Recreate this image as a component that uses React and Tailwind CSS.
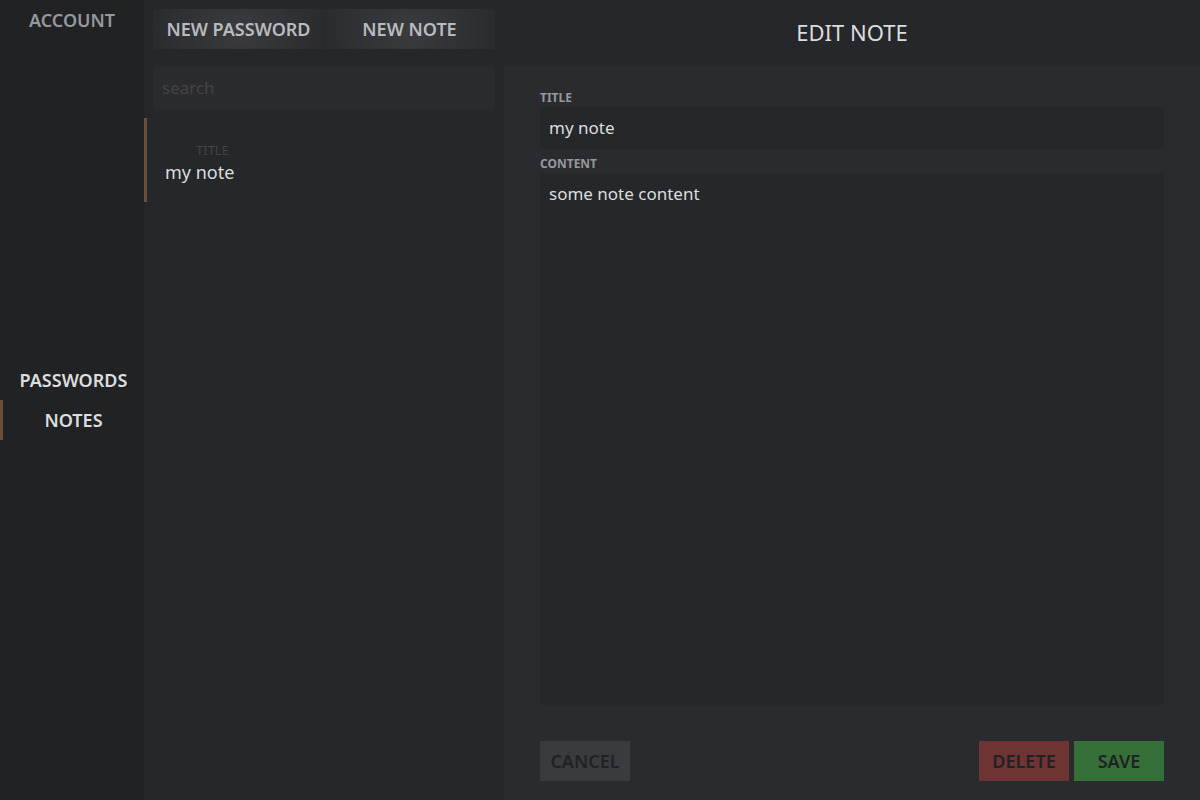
import { useState } from "react";

function NavButton({ children, active = false }) {
  return (
    <button
      type="button"
      className={`h-10 w-full border-l-3 text-center text-[18px] leading-6 font-semibold text-[#dcddde] ${
        active ? "border-[#694f3a]" : "border-transparent"
      }`}
    >
      {children}
    </button>
  );
}

function NewButton({ children }) {
  return (
    <button
      type="button"
      className="h-10 flex-1 bg-[radial-gradient(circle,#3a3b3e,#2a2b2e)] text-[18px] leading-6 font-semibold whitespace-nowrap text-[#b9bbbe]"
    >
      {children}
    </button>
  );
}

function ActionButton({ children, color, type = "button" }) {
  return (
    <button
      type={type}
      className={`h-10 w-[90px] text-[18px] leading-6 font-semibold text-[#202224] ${color}`}
    >
      {children}
    </button>
  );
}

export default function App() {
  const [title, setTitle] = useState("my note");
  const [content, setContent] = useState("some note content");
  const [query, setQuery] = useState("");

  return (
    <div className="flex h-screen bg-[#25272a] font-['Noto_Sans',sans-serif] text-[#dcddde]">
      <nav className="flex w-36 shrink-0 flex-col bg-[#202224]">
        <button
          type="button"
          className="h-10 w-full text-center text-[18px] leading-6 font-semibold text-[#96989d]"
        >
          ACCOUNT
        </button>
        <div className="flex flex-1 flex-col justify-center pb-10">
          <NavButton>PASSWORDS</NavButton>
          <NavButton active>NOTES</NavButton>
        </div>
      </nav>

      <section className="flex w-[360px] shrink-0 flex-col">
        <div className="flex p-[9px]">
          <NewButton>NEW PASSWORD</NewButton>
          <NewButton>NEW NOTE</NewButton>
        </div>
        <div className="flex p-[9px]">
          <input
            type="search"
            aria-label="search"
            placeholder="search"
            value={query}
            onChange={(e) => setQuery(e.target.value)}
            className="h-[42px] w-full bg-[#2a2b2e] px-[9px] pb-[2px] text-[17px] leading-6 outline-none placeholder:text-[#444444]"
          />
        </div>
        <ul>
          <li>
            <button
              type="button"
              className="flex h-[84px] w-full flex-col justify-center border-l-3 border-[#694f3a] px-[18px] pt-2 text-left"
            >
              <span className="pl-[31px] text-[13px] leading-4 text-[#444444]">TITLE</span>
              <span className="text-[18px] leading-7">{title}</span>
            </button>
          </li>
        </ul>
      </section>

      <main className="flex min-w-0 flex-1 flex-col">
        <header className="flex h-[65px] shrink-0 items-center justify-center pb-[2px]">
          <h1 className="text-[22px] leading-8">EDIT NOTE</h1>
        </header>
        <form
          className="flex flex-1 flex-col bg-[#2a2b2e] px-9 pt-6 pb-[19px]"
          onSubmit={(e) => e.preventDefault()}
        >
          <label htmlFor="title" className="text-[12px] leading-[18px] font-bold text-[#96989d]">
            TITLE
          </label>
          <input
            id="title"
            type="text"
            value={title}
            onChange={(e) => setTitle(e.target.value)}
            className="h-[42px] w-full bg-[#25272a] px-[9px] pb-[2px] text-[17px] leading-6 outline-none"
          />
          <label htmlFor="content" className="mt-[6px] text-[12px] leading-[18px] font-bold text-[#96989d]">
            CONTENT
          </label>
          <textarea
            id="content"
            value={content}
            onChange={(e) => setContent(e.target.value)}
            className="w-full flex-1 resize-none bg-[#25272a] p-[9px] text-[17px] leading-6 outline-none"
          />
          <div className="mt-9 flex gap-[5px]">
            <ActionButton color="bg-[#3a3b3e]">CANCEL</ActionButton>
            <div className="flex-1" />
            <ActionButton color="bg-[#6e3434]">DELETE</ActionButton>
            <ActionButton color="bg-[#367039]" type="submit">SAVE</ActionButton>
          </div>
        </form>
      </main>
    </div>
  );
}
